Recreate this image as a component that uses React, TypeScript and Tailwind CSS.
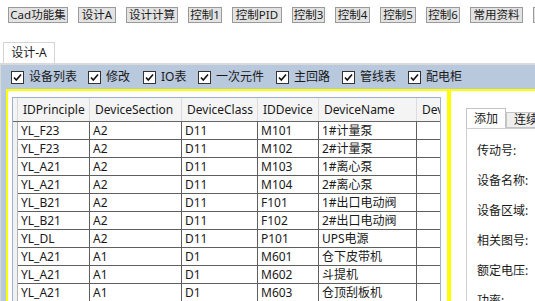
const FONT = { fontFamily: '"Noto Sans", "Noto Sans CJK SC", sans-serif' };

const toolButtons = [
  { label: "Cad功能集", w: "w-[60px]" },
  { label: "设计A", w: "w-[38px]" },
  { label: "设计计算", w: "w-[52px]" },
  { label: "控制1", w: "w-[34px]" },
  { label: "控制PID", w: "w-[50px]" },
  { label: "控制3", w: "w-[33px]" },
  { label: "控制4", w: "w-[35px]" },
  { label: "控制5", w: "w-[36px]" },
  { label: "控制6", w: "w-[34px]" },
  { label: "常用资料", w: "w-[53px]" },
  { label: "系统设置", w: "w-[53px]" },
];

const checks = [
  { label: "设备列表", w: "w-[77px]" },
  { label: "修改", w: "w-[55px]" },
  { label: "IO表", w: "w-[55px]" },
  { label: "一次元件", w: "w-[78px]" },
  { label: "主回路", w: "w-[66px]" },
  { label: "管线表", w: "w-[66px]" },
  { label: "配电柜", w: "w-[70px]" },
];

const columns = [
  { title: "IDPrinciple", w: "w-[72px]", key: "p" },
  { title: "DeviceSection", w: "w-[92px]", key: "s" },
  { title: "DeviceClass", w: "w-[76px]", key: "c" },
  { title: "IDDevice", w: "w-[61px]", key: "d" },
  { title: "DeviceName", w: "w-[98px]", key: "n" },
  { title: "DeviceType", w: "w-[80px]", key: "t" },
] as const;

type Row = { p: string; s: string; c: string; d: string; n: string; t: string };

const rows: Row[] = [
  { p: "YL_F23", s: "A2", c: "D11", d: "M101", n: "1#计量泵", t: "" },
  { p: "YL_F23", s: "A2", c: "D11", d: "M102", n: "2#计量泵", t: "" },
  { p: "YL_A21", s: "A2", c: "D11", d: "M103", n: "1#离心泵", t: "" },
  { p: "YL_A21", s: "A2", c: "D11", d: "M104", n: "2#离心泵", t: "" },
  { p: "YL_B21", s: "A2", c: "D11", d: "F101", n: "1#出口电动阀", t: "" },
  { p: "YL_B21", s: "A2", c: "D11", d: "F102", n: "2#出口电动阀", t: "" },
  { p: "YL_DL", s: "A2", c: "D11", d: "P101", n: "UPS电源", t: "" },
  { p: "YL_A21", s: "A1", c: "D1", d: "M601", n: "仓下皮带机", t: "" },
  { p: "YL_A21", s: "A1", c: "D1", d: "M602", n: "斗提机", t: "" },
  { p: "YL_A21", s: "A1", c: "D1", d: "M603", n: "仓顶刮板机", t: "" },
];

const fields = ["传动号:", "设备名称:", "设备区域:", "相关图号:", "额定电压:", "功率:"];

function CheckBox() {
  return (
    <span className="flex h-[13px] w-[13px] shrink-0 items-center justify-center border border-[#333] bg-white">
      <svg width="11" height="11" viewBox="0 0 11 11">
        <path d="M2 5.5 L4.3 8 L9 2.5" fill="none" stroke="#111" strokeWidth="1.6" />
      </svg>
    </span>
  );
}

export default function App() {
  return (
    <div className="relative h-[301px] w-[535px] overflow-hidden bg-white text-[#1a1a1a]" style={FONT}>
      {/* toolbar */}
      <div className="flex gap-[10px] whitespace-nowrap pl-[8px] pt-[7px]">
        {toolButtons.map((b) => (
          <div
            key={b.label}
            className={`${b.w} flex h-[16px] shrink-0 items-center justify-center overflow-hidden border border-[#9a9a9a] bg-[#e3e3e3] text-[11.5px] leading-none`}
          >
            {b.label}
          </div>
        ))}
      </div>

      {/* tab strip */}
      <div className="mt-[19px] flex pl-[3px]">
        <div className="flex h-[21px] w-[52px] items-center justify-center border border-b-0 border-[#d4d4d4] bg-white text-[12px]">
          设计-A
        </div>
      </div>

      {/* tab page */}
      <div className="h-[240px] border-l border-t-2 border-[#d9d9d9] bg-[#b8c8dd] pl-[2px]">
        <div className="flex h-[24px] items-center pl-[8px] text-[12px]">
          {checks.map((c) => (
            <div key={c.label} className={`${c.w} flex shrink-0 items-center gap-[5px]`}>
              <CheckBox />
              <span className="whitespace-nowrap">{c.label}</span>
            </div>
          ))}
        </div>

        {/* split container */}
        <div className="ml-[3px] flex h-[216px] gap-[4px] bg-[#ffff00] pl-[2px] pt-[2px]">
          {/* left panel */}
          <div className="w-[439px] shrink-0 overflow-hidden bg-white pl-[4px] pt-[6px]">
            <div className="w-[429px] overflow-hidden border border-[#9fb1c8] bg-white text-[12px]">
              <div className="flex h-[24px] w-[600px] border-b border-[#666] bg-[#f4f4f4]">
                <div className="w-[5px] shrink-0 border-r border-[#d8d8d8]" />
                {columns.map((col) => (
                  <div
                    key={col.key}
                    className={`${col.w} flex shrink-0 items-center overflow-hidden whitespace-nowrap border-r border-[#dcdcdc] pl-[5px]`}
                  >
                    {col.title}
                  </div>
                ))}
              </div>
              {rows.map((r, i) => (
                <div key={i} className="flex h-[18px] w-[600px]">
                  <div className="w-[5px] shrink-0 border-r border-[#b5b5b5] bg-[#f1f1f1]" />
                  {columns.map((col) => (
                    <div
                      key={col.key}
                      className={`${col.w} flex shrink-0 items-center overflow-hidden whitespace-nowrap border-b border-r border-[#5f5f5f] pl-[3px]`}
                    >
                      {r[col.key]}
                    </div>
                  ))}
                </div>
              ))}
            </div>
          </div>

          {/* right panel */}
          <div className="flex-1 overflow-hidden bg-white pl-[15px] pt-[17px] text-[12px]">
            <div className="flex items-end whitespace-nowrap">
              <div className="flex h-[20px] w-[40px] shrink-0 items-center justify-center border border-b-0 border-[#c4c4c4] bg-white">
                添加
              </div>
              <div className="flex h-[16px] w-[40px] shrink-0 items-center justify-center border border-[#c4c4c4] bg-[#efefef]">
                连续
              </div>
            </div>
            <div className="h-[200px] border-l border-t border-[#cfcfcf] pl-[10px]">
              {fields.map((f) => (
                <div key={f} className="flex h-[30px] items-center whitespace-nowrap pt-[14px]">
                  {f}
                </div>
              ))}
            </div>
          </div>
        </div>
      </div>
    </div>
  );
}
